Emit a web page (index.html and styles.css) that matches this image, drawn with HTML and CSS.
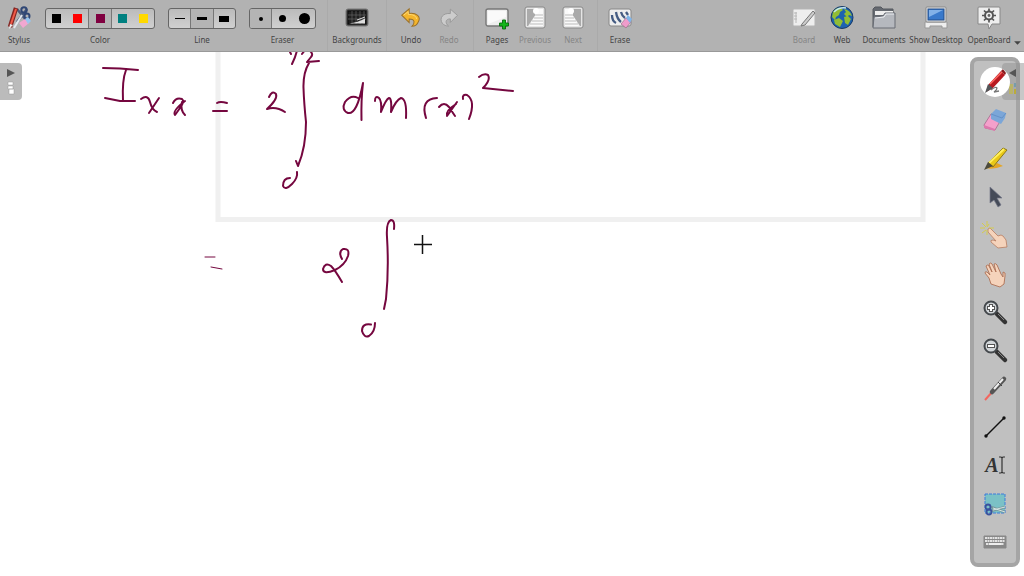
FILE: index.html
```html
<!DOCTYPE html>
<html lang="en">
<head>
<meta charset="utf-8">
<title>OpenBoard</title>
<link rel="stylesheet" href="styles.css">
</head>
<body>
<header class="toolbar">
  <button class="tool"><svg class="icon" viewBox="0 0 24 24"><path d="M10 16 20 3M19 14 10 3" stroke="#4b5c7c" stroke-width="2.5"/><circle cx="17" cy="4" r="2.7" fill="none" stroke="#304775" stroke-width="2"/><circle cx="20" cy="10" r="2.5" fill="none" stroke="#304775" stroke-width="2"/><path d="M3 21 9 2" stroke="#842421" stroke-width="4.5"/><path d="M4 18 9 3" stroke="#f05a48" stroke-width="2"/><path d="m2 23 1-5 3 1z" fill="#eee"/><path d="M7 22 15 9" stroke="#e3e7ee" stroke-width="2"/><path d="m12 17 6-4 4 4-6 5z" fill="#f1a7d1"/><path d="m18 13 3-2 3 4-3 3z" fill="#98c6ef"/></svg><span>Stylus</span></button>
  <div class="field color"><div class="choices" role="group" aria-labelledby="color">
    <button aria-label="Black"><i class="swatch black"></i></button><button aria-label="Red"><i class="swatch red"></i></button><button class="on" aria-label="Maroon"><i class="swatch maroon"></i></button><button aria-label="Teal"><i class="swatch teal"></i></button><button aria-label="Yellow"><i class="swatch yellow"></i></button></div><span id="color">Color</span></div>
  <div class="field line"><div class="choices" role="group" aria-labelledby="line">
    <button aria-label="Thin"><i class="dash thin"></i></button><button class="on" aria-label="Medium"><i class="dash medium"></i></button><button aria-label="Thick"><i class="dash thick"></i></button></div><span id="line">Line</span></div>
  <div class="field eraser"><div class="choices" role="group" aria-labelledby="eraser">
    <button class="on" aria-label="Small"><i class="dot small"></i></button><button aria-label="Medium"><i class="dot mid"></i></button><button aria-label="Large"><i class="dot large"></i></button></div><span id="eraser">Eraser</span></div>
  <div class="cluster first"><button class="tool wide"><svg class="icon" viewBox="0 0 24 24"><rect x="1" y="3" width="22" height="17" rx="2" fill="#454545" stroke="#777"/><rect x="3" y="5" width="18" height="13" fill="#202020" stroke="#090909"/><path d="M3 9h18M3 13h18M7 5v13M11 5v13M15 5v13M19 5v13" stroke="#666" stroke-width=".7"/><path d="M4 17.500q9-1 16-5v5z" fill="#ddd"/><path d="m12 14 8-3" stroke="#ddd"/></svg><span>Backgrounds</span></button></div>
  <div class="cluster history"><button class="tool"><svg class="icon" viewBox="-1 -1 26 26"><path d="m2 9 8-7v5c8-1 13 4 10 9-1 3-4 5-7 5 3-3 4-8-3-8v4z" fill="#f4b52c" stroke="#9b712a" stroke-width="1.1"/><path d="m4 9 5-4v3c5 0 9 2 9 5" fill="none" stroke="#ffda78"/></svg><span>Undo</span></button><button class="tool" disabled><svg class="icon" viewBox="-2 -1 27 26"><path d="m21 9-8-7v5C5 6 0 12 4 18c2 2 4 3 7 3-4-3-4-8 2-8v4z" fill="#ccc" stroke="#969696"/></svg><span>Redo</span></button></div>
  <div class="cluster pages"><button class="tool"><svg class="icon" viewBox="0 0 24 24"><rect x="1" y="3" width="22" height="17" rx="2" fill="#eee" stroke="#777" stroke-width="1.4"/><path d="M3 5h18v6L3 18z" fill="#fafafa"/><path d="M17.500 14h3v3h3v3h-3v3h-3v-3h-3v-3h3z" fill="#15b51b" stroke="#076c0c" stroke-width=".9"/></svg><span>Pages</span></button><button class="tool" disabled><svg class="icon" viewBox="0 0 24 24"><rect x="2" y="1" width="20" height="21" rx="2" fill="#e5e5e5" stroke="#888"/><path d="M4 3h9v5L5 20H4z" fill="#aaa"/><path d="M12 3h8v17H6l6-10z" fill="#fafafa"/><path d="M12 9h8M11 12h9M9 15h11M7 18h13" stroke="#bbb"/><circle cx="13" cy="5" r="3" fill="#fff"/></svg><span>Previous</span></button><button class="tool" disabled><svg class="icon" viewBox="0 0 24 24"><rect x="2" y="1" width="20" height="21" rx="2" fill="#e5e5e5" stroke="#888"/><path d="M20 3h-9v5l8 12h1z" fill="#aaa"/><path d="M12 3H4v17h14l-6-10z" fill="#fafafa"/><path d="M4 9h8M4 12h9M4 15h11M4 18h13" stroke="#bbb"/><circle cx="10" cy="5" r="3" fill="#fff"/></svg><span>Next</span></button></div>
  <div class="cluster erase"><button class="tool"><svg class="icon" viewBox="0 0 24 24"><rect x="1" y="3" width="22" height="17" rx="2" fill="#eee" stroke="#888"/><path d="M4 9q0 6 4 8M8 6q1 7 5 10M13 6q1 4 4 6M18 6l2 3" fill="none" stroke="#455c83" stroke-width="2.300"/><path d="m13 18 5-6 5 4-5 6z" fill="#ef9ccb" stroke="#967087" stroke-width=".7"/><path d="m18 12 2-3 4 4-2 4z" fill="#80b5e9"/></svg><span>Erase</span></button></div>
  <nav class="modes">
    <button class="tool" disabled><svg class="icon" viewBox="0 0 24 24"><rect x="1" y="3" width="22" height="17" rx="1" fill="#eee" stroke="#b5b5b5"/><path d="M4 6v11M2 7h3m-3 3h3m-3 3h3" stroke="#b8b8b8"/><path d="m10 18 11-13 2 2-10 12-4 1z" fill="#ccc" stroke="#777"/></svg><span>Board</span></button>
    <button class="tool"><svg class="icon" viewBox="0 0 24 24"><circle cx="12" cy="11.500" r="11" fill="#1d62b1" stroke="#183964"/><path d="M3 6q4-5 8-4l2 2-3 2-1 3-3 2-1 3-3-3zM14 3q6 1 8 7l-3-1-2 2-3-3 2-2zM4 14l5-2 4 3-3 6-5-3zM14 11l4-1 3 3-3 6-3-2z" fill="#91bd35"/><path d="M4 6q5-5 12-4" fill="none" stroke="#c5e7ef" stroke-width="1.5"/></svg><span>Web</span></button>
    <button class="tool docs"><svg class="icon" viewBox="0 0 24 24"><path d="M1 21V3l2-2h6l2 2h10v17z" fill="#656970" stroke="#55585e"/><path d="M3 5h18v4H3z" fill="#eee"/><path d="m2 11 9-1 2-3h10v15H1z" fill="#b5b8be" stroke="#696d75"/><path d="m3 12 9-1 2-3h8" fill="none" stroke="#eceef2"/></svg><span>Documents</span></button>
    <button class="tool wide"><svg class="icon" viewBox="0 0 24 24"><path d="M1 16h22v6h-5v-2H6v2H1z" fill="#eee" stroke="#999"/><rect x="2" y="1" width="20" height="15" rx="1" fill="#e8e8e8" stroke="#888"/><rect x="4" y="3" width="16" height="11" fill="#3979cb" stroke="#244f89"/><path d="M5 4h14L5 11z" fill="#82b1e8"/></svg><span>Show Desktop</span></button>
    <button class="tool openboard"><svg class="icon" viewBox="0 0 24 24"><path d="M2 1h20q1 0 1 1v16h-8l-3 5-1-5H1V2q0-1 1-1z" fill="#eee" stroke="#888"/><circle cx="12" cy="9.500" r="4" fill="none" stroke="#555" stroke-width="2"/><path d="M12 2.500v3m0 8v3M5 9.500h3m8 0h3M7 4.500l2 2m6 6 2 2m0-10-2 2m-6 6-2 2" stroke="#555" stroke-width="1.7"/><circle cx="12" cy="9.500" r="1.400" fill="#666"/></svg><span>OpenBoard</span></button>
    <button class="more" aria-label="More"><svg viewBox="0 0 8 5"><path d="M1 1h6L4 4z" fill="#444"/></svg></button>
  </nav>
</header>
<main class="board">
  <svg class="ink" viewBox="0 52 1024 524" role="img" aria-label="Handwritten integral for the moment of inertia">
    <path d="M218 52V219.500H923V52" fill="none" stroke="#f0f0f0" stroke-width="5"/>
    <g class="stroke">
      <path d="M103 68 120 68.500 138 70M126 70Q122 80 123 101M105 98 120 101H135"/>
      <path d="M141 99Q148 94 150 102T157 112M159 98 149 113M173 103Q176 97 182 99 185 101 180 108T175 115Q172 111 185 101M182 102Q180 110 185 115"/>
      <path d="M217 103Q220 101 227 103M213 111H227"/>
      <path d="M269 97Q272 90 276 94 278 99 267 109 276 106 285 112"/>
      <path d="M289 50 291 54M297 50Q296 56 292 64M302 54 305 50M309 50Q314 54 311 57L307 62 319 61M309 63Q303 73 303.500 88 304 103 306 122 306 147 298 166L296 161"/>
      <path d="M290 178Q283 178 283 186 285 191 292 184 298 178 297 172"/>
      <path d="M358 98Q351 94 345 102 341 110 348 113 357 115 363 83 361 100 361.500 120"/>
      <path d="M375 101Q375 95 379 98 382 101 381 112 386 99 389 98 392 98 391 112 396 100 401 98 407 99 406 118"/>
      <path d="M437 98Q420 99 426 118M439 107Q444 101 449 107L455 116M457 102 447 116Q445 111 456 104M463 99Q462 94 467 95 476 101 469 119"/>
      <path d="M479 77Q484 73 488 75 491 80 483 88L513 91"/>
      <path class="fine" d="M205 257H215M211 267 222 269"/>
      <path d="M342 259Q338 252 343 249 350 248 348 256 345 265 335 270 323 275 323 269 325 262 331 266 335 270 342 282"/>
      <path d="M394 229Q395 220 391 220 386 222 387 237 389 270 386 299L384 309"/>
      <path d="M371 324.500Q362 323 362 331 364 338 369 336 375 332 375 323"/>
    </g>
    <path d="M414 244.500H432M422.500 235V254" stroke="#111" stroke-width="1.500"/>
  </svg>
  <button class="flap left" aria-label="Open page list"><svg viewBox="0 0 22 36"><path d="m7 5 8 4-8 4z" fill="#555"/><path d="M8 18h5v3H8zm0 4h5v3H8zm1 3h5v5H9z" fill="#fff" stroke="#999" stroke-width=".5"/></svg></button>
  <nav class="palette" aria-label="Drawing tools">
    <button class="selected" aria-label="Pen"><svg viewBox="0 0 30 30"><path d="M11 23q5-4 6-2 0 2-3 4l5-1" fill="none" stroke="#777" stroke-width="1.300"/><path d="M6 25 9 17 21 4l4 4-12 13z" fill="#b71920"/><path d="m10 17 13-13" stroke="#ff6962" stroke-width="1.5"/><path d="m5 26 3-9 5 4z" fill="#535659"/><path d="m21 4 2-2 3 4-1 2z" fill="#891b1d"/></svg></button>
    <button aria-label="Eraser"><svg viewBox="0 0 30 30"><path d="m4 20 7-11 11 4-7 12-10-2z" fill="#f5a0cb" stroke="#ad7997"/><path d="m4 20 11 4v2L4 23z" fill="#dd78ad"/><path d="m11 9 5-5 10 4-1 5-4 6-10-5z" fill="#7ba6d8"/><path d="m11 9 11 4 4-5" fill="none" stroke="#6491c8"/></svg></button>
    <button aria-label="Highlighter"><svg viewBox="0 0 30 30"><path d="M6 24q7 2 17-2l-6-3z" fill="#e5a625"/><path d="m8 19 15-15 4 2-14 17z" fill="#e9c817" stroke="#8b781c"/><path d="m9 19 15-14" stroke="#fff05c" stroke-width="2"/><path d="m4 26 4-8 5 4z" fill="#4d4b3c"/></svg></button>
    <button aria-label="Select"><svg viewBox="0 0 30 30"><path d="M10 5v16l4-3 4 7 3-2-4-7h5z" fill="#454b58" stroke="#75798a" stroke-width=".7"/></svg></button>
    <button aria-label="Interact"><svg viewBox="0 0 30 30"><path d="m8 9 2-1 8 8 3-1 2 1 3 4 1 7-9 1-7-6q-1-2 2-2l3 1-8-9z" fill="#f5d3bb" stroke="#b87e62" stroke-width=".8"/><path d="M7 1v5M7 10v5M0 8h5m4 0h5M2 3l4 4m3-3-2 3m-1 3-4 3" stroke="#d5cc4c"/></svg></button>
    <button aria-label="Hand"><svg viewBox="0 0 30 30"><path d="m11 25-2-6-4-5q0-2 2-1l3 3-4-9q2-2 3 0l3 6-3-8q2-2 3 0l4 8-2-8q2-1 3 1l4 9 2 3v-5q3 0 2 4l-1 8-4 3z" fill="#f5d3bb" stroke="#ae7155" stroke-width=".9"/></svg></button>
    <button aria-label="Zoom in"><svg viewBox="0 0 30 30"><path d="m17 17 8 8" stroke="#333" stroke-width="4.500" stroke-linecap="round"/><path d="m18 17 6 6" stroke="#888"/><circle cx="11" cy="11" r="6.500" fill="#d1d5d8" stroke="#44484c" stroke-width="2"/><path d="M11 7v8M7 11h8" stroke="#555" stroke-width="4"/><path d="M11 8v6M8 11h6" stroke="#fff" stroke-width="2"/></svg></button>
    <button aria-label="Zoom out"><svg viewBox="0 0 30 30"><path d="m17 17 8 8" stroke="#333" stroke-width="4.500" stroke-linecap="round"/><path d="m18 17 6 6" stroke="#888"/><circle cx="11" cy="11" r="6.500" fill="#d1d5d8" stroke="#44484c" stroke-width="2"/><path d="M7 11h8" stroke="#555" stroke-width="4"/><path d="M8 11h6" stroke="#fff" stroke-width="2"/></svg></button>
    <button aria-label="Laser pointer"><svg viewBox="0 0 30 30"><path d="m5 26 8-9" stroke="#f2665f" stroke-width="2"/><path d="m12 18 12-13" stroke="#555" stroke-width="4.500" stroke-linecap="round"/><path d="m14 15 9-10" stroke="#eee" stroke-width="2"/><path d="m18 8 4 4" stroke="#444"/></svg></button>
    <button aria-label="Line"><svg viewBox="0 0 30 30"><path d="M6 24 24 6" stroke="#111" stroke-width="1.500"/><circle cx="6" cy="24" r="1.700"/><circle cx="24" cy="6" r="1.700"/></svg></button>
    <button class="text-tool" aria-label="Text"><span>A</span><svg viewBox="0 0 6 18"><path d="M0 1h2l1 1 1-1h2M3 2v14M0 17h2l1-1 1 1h2" fill="none" stroke="#333" stroke-width="1.200"/></svg></button>
    <button aria-label="Capture"><svg viewBox="0 0 30 30"><path d="M5 5h20v19H5z" fill="#7bc1c6" stroke="#3c7bdc" stroke-dasharray="3 1"/><path d="m11 18 14 5M11 22l14-4" stroke="#77999c" stroke-width="2.500"/><path d="m13 19 12 4M13 21l12-3" stroke="#d4e3e2"/><circle cx="8" cy="18" r="2.500" fill="none" stroke="#3a529d" stroke-width="1.800"/><circle cx="9" cy="23" r="2.500" fill="none" stroke="#3a529d" stroke-width="1.800"/></svg></button>
    <button aria-label="Keyboard"><svg viewBox="0 0 30 30"><path d="M4 9h22v12H4z" fill="#888" stroke="#888"/><path d="M5 11h20M5 14h20M6 17h18" stroke="#e2e2e2" stroke-width="2" stroke-dasharray="2 .5"/><path d="M9 17h12" stroke="#eee" stroke-width="2"/></svg></button>
  </nav>
  <button class="flap right" aria-label="Open library"><svg viewBox="0 0 22 36"><path d="m14 5-7 4 7 4z" fill="#555"/><path d="M7 20h4v10H7z" fill="#b9b369"/><path d="M12 19h2v4h-2z" fill="#779dab"/><path d="M12 25h2v5h-2z" fill="#bbab39"/></svg></button>
</main>
</body>
</html>
```
FILE: styles.css
```css
* { box-sizing: border-box; }
body {
  margin: 0;
  height: 100vh;
  display: flex;
  flex-direction: column;
  overflow: hidden;
  background: #fff;
  color: #444;
  font: 8px/12px "Noto Sans", sans-serif;
}
button {
  border: 0;
  padding: 0;
  background: none;
  color: inherit;
  font: inherit;
}
.toolbar {
  display: flex;
  flex: none;
  height: 52px;
  background: #b2b2b2;
  border-bottom: 1px solid #999;
}
.tool {
  width: 38px;
  flex: none;
  display: flex;
  flex-direction: column;
  align-items: center;
  padding-top: 6px;
  gap: 4px;
  white-space: nowrap;
}
.tool:disabled { color: #858585; }
.icon { width: 24px; height: 24px; flex: none; fill: none; }
.wide { width: 58px; }
.field { text-align: center; padding-top: 8px; flex: none; }
.color { width: 110px; margin-left: 7px; }
.line { width: 68px; margin-left: 13px; }
.eraser { width: 67px; margin-left: 13px; }
.choices {
  display: flex;
  height: 21px;
  margin-bottom: 5px;
  border: 1px solid #666;
  border-radius: 3px;
  background: linear-gradient(#bbb, #d0d0d0);
  overflow: hidden;
}
.choices button { flex: 1; display: grid; place-items: center; }
.choices .on { background: #b4b4b4; border: solid #777; border-width: 0 1px; }
.choices .on:first-child { border-left: 0; }
.swatch { width: 9px; height: 9px; }
.black { background: #000; }
.red { background: #f00; }
.maroon { background: #800040; }
.teal { background: #008080; }
.yellow { background: #ffd900; }
.dash { width: 10px; background: #000; }
.thin { height: 1px; }
.medium { height: 3px; }
.thick { height: 6px; }
.dot { border-radius: 50%; background: #000; }
.small { width: 4px; height: 4px; }
.mid { width: 7px; height: 7px; }
.large { width: 11px; height: 11px; }
.cluster { display: flex; border-left: 1px solid #aaa; }
.first { margin-left: 11px; }
.history { padding: 0 5px; }
.pages { padding: 0 5px 0 4px; }
.erase { padding-left: 3px; }
.modes { display: flex; margin-left: auto; padding-right: 2px; }
.docs { width: 46px; }
.openboard { width: 48px; }
.more { width: 9px; display: flex; align-items: flex-end; padding-bottom: 5px; }
.more svg { width: 9px; height: 6px; }
.board { position: relative; flex: 1; overflow: hidden; }
.ink { display: block; width: 1024px; height: 524px; }
.stroke { fill: none; stroke: #75073f; stroke-width: 2; stroke-linecap: round; stroke-linejoin: round; }
.fine { stroke-width: 1; }
.flap {
  position: absolute;
  top: 11px;
  width: 22px;
  height: 37px;
  background: #bbb;
}
.flap svg { display: block; width: 22px; height: 36px; }
.left { left: 0; border-radius: 0 4px 4px 0; }
.right { right: 0; background: rgba(145, 145, 145, .5); border-radius: 4px 0 0 4px; }
.palette {
  position: absolute;
  top: 5px;
  right: 4px;
  bottom: 9px;
  width: 50px;
  padding: 2px 0;
  display: flex;
  flex-direction: column;
  justify-content: space-between;
  background: #c0c0c0;
  border: 4px solid #a5a5a5;
  border-radius: 8px;
}
.palette button { height: 38px; display: flex; align-items: center; justify-content: center; }
.palette svg { width: 30px; height: 30px; fill: none; }
.palette circle:not([fill]) { fill: #111; }
.palette .selected { z-index: 1; }
.right { z-index: 0; }
.palette .selected svg { background: #fff; border-radius: 50%; }
.palette .text-tool span { font: italic bold 20px/24px "Liberation Serif", serif; color: #333; }
.palette .text-tool svg { width: 6px; height: 18px; }
```
